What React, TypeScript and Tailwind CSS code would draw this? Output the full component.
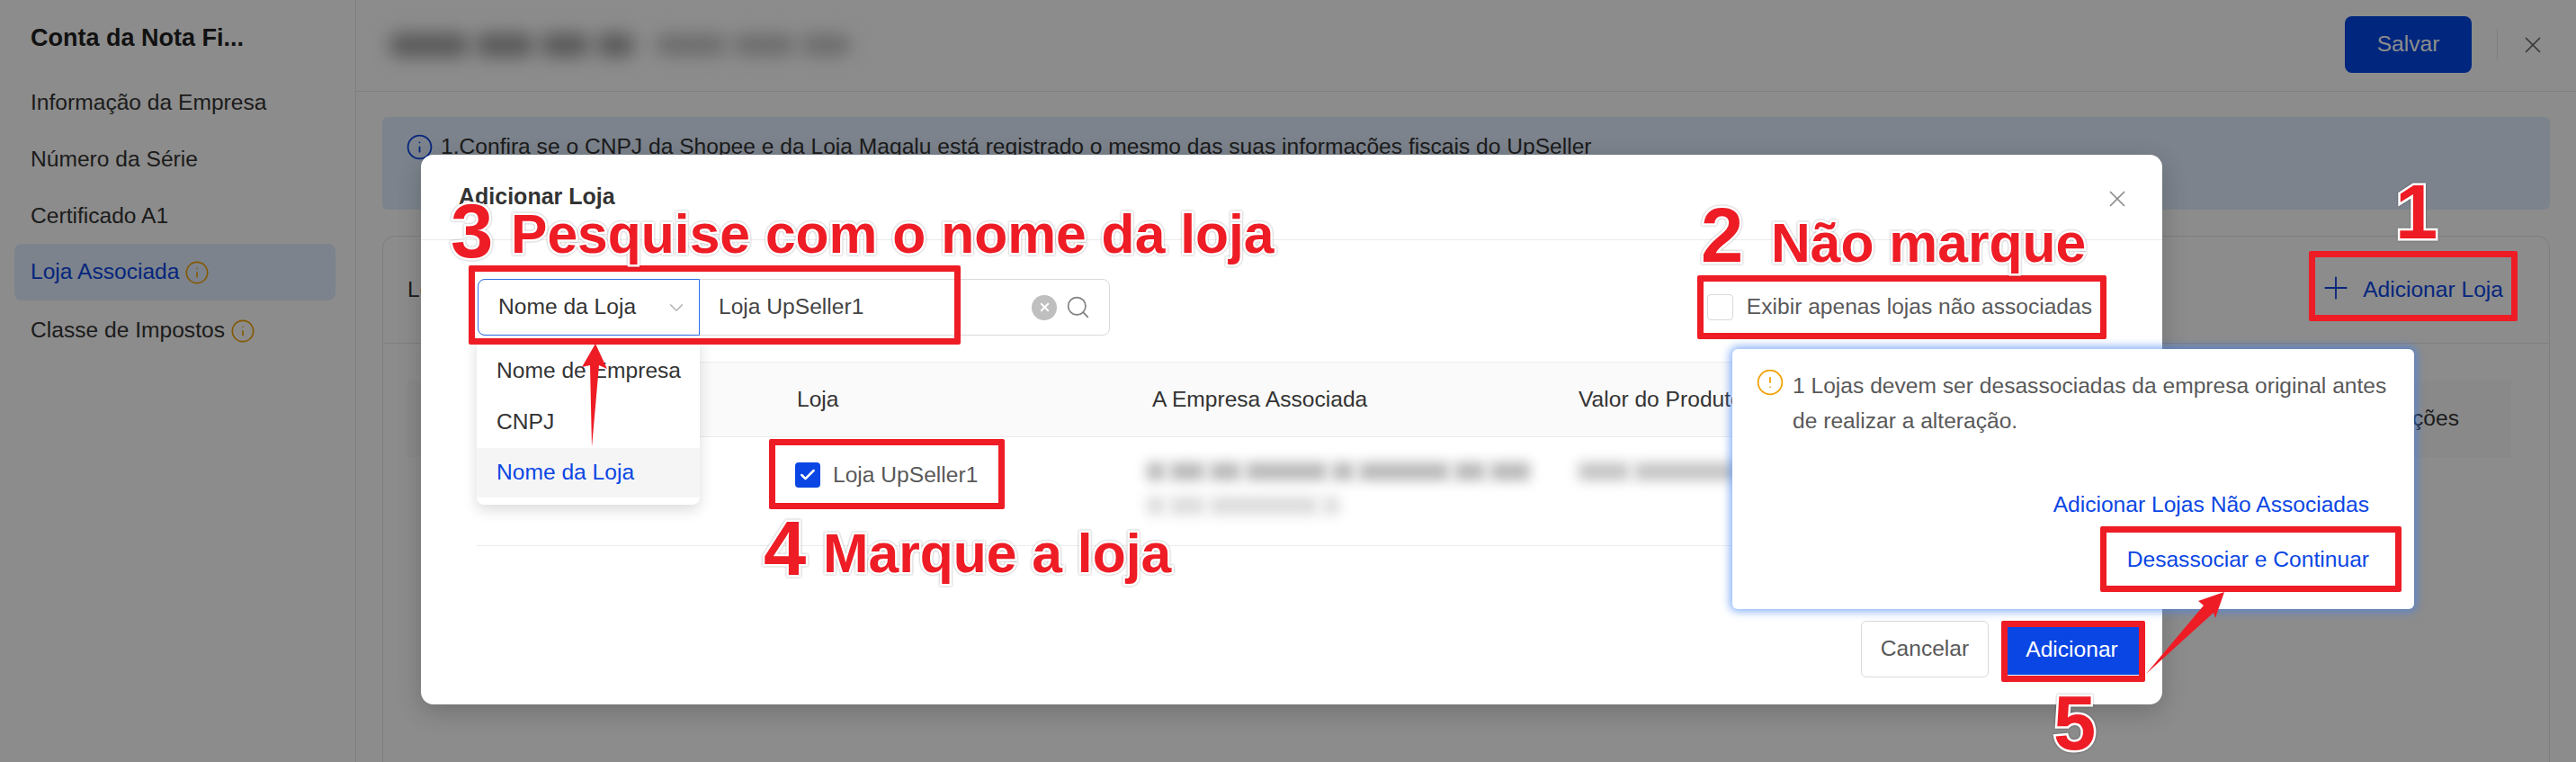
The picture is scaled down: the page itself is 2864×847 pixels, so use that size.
import { Check, ChevronDown, CircleAlert, Info, Plus, Search, X } from "lucide-react";

const menuItems = ["Informação da Empresa", "Número da Série", "Certificado A1"];

const noteText =
  "absolute whitespace-nowrap font-bold leading-none text-[#ee1c25] [paint-order:stroke_fill] [-webkit-text-stroke:5px_#ffffff] [filter:drop-shadow(0_0_1px_rgba(0,0,0,0.35))]";
const noteBox = "absolute rounded-[2px] border-[#ee1c25]";

// the reference has these texts blurred out, so only soft blotches are drawn
function Blotches({ widths, className }: { widths: number[]; className: string }) {
  return (
    <div className="flex gap-[6px]">
      {widths.map((w, i) => (
        <div key={i} className={className} style={{ width: w }} />
      ))}
    </div>
  );
}

function Sidebar() {
  return (
    <aside className="w-[396px] shrink-0 border-r border-[#e8e8e8] bg-[#ffffff] pl-4 pr-[22px]">
      <h1 className="h-[84px] pl-[18px] pt-[24px] text-[27px] font-bold leading-[36px] text-[#1f1f1f]">
        Conta da Nota Fi...
      </h1>
      <nav className="flex flex-col">
        {menuItems.map((item, i) => (
          <a key={item} className={`flex h-[63px] items-center pl-[18px] text-[#333333] ${i === 0 ? "-mt-px" : ""}`}>
            {item}
          </a>
        ))}
        <a className="-mt-px flex h-[63px] items-center gap-[6px] rounded-[8px] bg-[#e2eeff] pl-[18px] text-[#0a46e4]">
          Loja Associada
          <Info size={28} strokeWidth={1.4} className="text-[#f0a000]" />
        </a>
        <a className="flex h-[67px] items-center gap-[6px] pl-[18px] text-[#333333]">
          Classe de Impostos
          <Info size={28} strokeWidth={1.4} className="text-[#f0a000]" />
        </a>
      </nav>
    </aside>
  );
}

function PageBehind() {
  return (
    <main className="flex min-w-0 flex-1 flex-col">
      <header className="flex h-[102px] items-center border-b border-[#e8e8e8] pb-[2px] pl-[36px] pr-[33px]">
        <Blotches widths={[90, 66, 56, 44]} className="h-[26px] rounded-full bg-[#a0a0a0] blur-[10px]" />
        <div className="ml-[22px]">
          <Blotches widths={[80, 70, 56]} className="h-[22px] rounded-full bg-[#c0c0c0] blur-[10px]" />
        </div>
        <button className="ml-auto h-[63px] w-[141px] rounded-[8px] bg-[#0045e6] text-white">Salvar</button>
        <div className="ml-[28px] h-[35px] w-px bg-[#e8e8e8]" />
        <X size={30} strokeWidth={1.4} className="ml-[24px] text-[#666666]" />
      </header>
      <section className="mx-[29px] mt-[28px] h-[103px] rounded-[6px] bg-[#e2eeff] pl-[26px] pt-[15px]">
        <div className="flex items-center gap-[8px] text-[#333333]">
          <Info size={31} strokeWidth={1.4} className="text-[#0a46e4]" />
          1.Confira se o CNPJ da Shopee e da Loja Magalu está registrado o mesmo das suas informações fiscais do UpSeller
        </div>
      </section>
      <section className="mx-[29px] mt-[29px] flex-1 rounded-t-[14px] border border-b-0 border-[#e8e8e8]">
        <div className="flex h-[119px] items-center justify-between border-b border-[#e8e8e8] pl-[27px] pr-[51px]">
          <span className="text-[#333333]">Lojas Associadas</span>
          <span className="flex items-center gap-[10px] text-[#0a46e4]">
            <Plus size={40} strokeWidth={1.1} className="-mt-[4px]" />
            Adicionar Loja
          </span>
        </div>
        <div className="ml-[27px] mr-[42px] mt-[41px] flex h-[85px] items-center justify-end bg-[#fafafa] pr-[58px] text-[#333333]">
          Operações
        </div>
      </section>
    </main>
  );
}

function StoreModal() {
  return (
    <div className="absolute left-[468px] top-[172px] flex h-[611px] w-[1936px] flex-col rounded-[14px] bg-white shadow-[0_8px_28px_rgba(0,0,0,0.2)]">
      <div className="flex h-[95px] items-start justify-between border-b border-[#ececec] pl-[42px] pr-[35px] pt-[28px]">
        <h2 className="text-[25px] font-bold leading-[36px] text-[#333333]">Adicionar Loja</h2>
        <X size={30} strokeWidth={1.4} className="mt-[6px] text-[#8c8c8c]" />
      </div>

      <div className="flex items-center justify-between pl-[63px] pr-[78px] pt-[43px]">
        <div className="flex h-[63px] w-[703px] rounded-[8px] border border-[#d9d9d9]">
          <div className="-ml-px -mt-px flex h-[63px] w-[247px] shrink-0 items-center justify-between rounded-l-[8px] border border-[#2f6fe8] pl-[22px] pr-[12px] text-[#333333]">
            Nome da Loja
            <ChevronDown size={26} strokeWidth={1} className="text-[#a8a8a8]" />
          </div>
          <div className="flex flex-1 items-center pl-[21px] pr-[20px] text-[#444444]">
            Loja UpSeller1
            <span className="ml-auto flex h-[28px] w-[28px] items-center justify-center rounded-full bg-[#bfbfbf]">
              <X size={15} strokeWidth={3} className="text-white" />
            </span>
            <Search size={29} strokeWidth={1.4} className="ml-[9px] text-[#808080]" />
          </div>
        </div>
        <label className="flex items-center gap-[15px] text-[#595959]">
          <span className="h-[29px] w-[29px] rounded-[4px] border border-[#d9d9d9] bg-white" />
          Exibir apenas lojas não associadas
        </label>
      </div>

      <div className="mx-[62px] mt-[29px] border-b border-[#ececec]">
        <div className="grid h-[84px] grid-cols-[356px_395px_474px_1fr] items-center border-y border-[#ececec] bg-[#fafafa] text-[#333333]">
          <span />
          <span>Loja</span>
          <span>A Empresa Associada</span>
          <span>Valor do Produto</span>
        </div>
        <div className="grid h-[120px] grid-cols-[354px_391px_480px_1fr] pt-[28px]">
          <span />
          <span className="flex h-[28px] items-center gap-[14px] text-[#595959]">
            <span className="flex h-[28px] w-[28px] items-center justify-center rounded-[4px] bg-[#0a46e4]">
              <Check size={20} strokeWidth={3} className="text-white" />
            </span>
            Loja UpSeller1
          </span>
          <div className="flex flex-col gap-[18px]">
            <Blotches widths={[20, 38, 34, 90, 24, 100, 34, 44]} className="h-[20px] bg-[#b8b8b8] blur-[7px]" />
            <Blotches widths={[20, 38, 120, 18]} className="h-[20px] bg-[#dcdcdc] blur-[7px]" />
          </div>
          <Blotches widths={[56, 120, 60]} className="h-[20px] bg-[#c4c4c4] blur-[7px]" />
        </div>
      </div>

      <div className="mt-auto flex justify-end gap-[21px] pb-[28px] pr-[26px]">
        <button className="h-[63px] w-[142px] rounded-[6px] border border-[#d9d9d9] text-[#595959]">Cancelar</button>
        <button className="my-[5px] h-[55px] w-[146px] bg-[#0a46e4] pr-[3px] text-white">Adicionar</button>
      </div>

      <ul className="absolute left-[62px] top-[201px] w-[248px] rounded-b-[8px] bg-white pb-[8px] pt-[10px] text-[#333333] shadow-[0_6px_16px_rgba(0,0,0,0.14)]">
        <li className="flex h-[58px] items-center pl-[22px]">Nome de Empresa</li>
        <li className="flex h-[57px] items-center pl-[22px]">CNPJ</li>
        <li className="flex h-[55px] items-center bg-[#f5f5f5] pl-[22px] text-[#0a46e4]">Nome da Loja</li>
      </ul>
    </div>
  );
}

function UnlinkPopover() {
  return (
    <div className="absolute left-[1926px] top-[388px] flex h-[289px] w-[758px] flex-col rounded-[6px] bg-white pl-[26px] pr-[30px] pt-[21px] shadow-[0_0_10px_3px_rgba(60,130,245,0.6)]">
      <div className="flex gap-[9px] leading-[39px] text-[#595959]">
        <CircleAlert size={32} strokeWidth={1.3} className="shrink-0 text-[#f0a000]" />
        <p>1 Lojas devem ser desassociadas da empresa original antes de realizar a alteração.</p>
      </div>
      <a className="ml-auto mr-[20px] mt-[56px] text-[#0a46e4]">Adicionar Lojas Não Associadas</a>
      <a className="ml-auto mr-[20px] mt-[24px] text-[#0a46e4]">Desassociar e Continuar</a>
    </div>
  );
}

function Annotations() {
  return (
    <>
      <div className={`${noteBox} left-[521px] top-[295px] h-[88px] w-[547px] border-[7px]`} />
      <div className={`${noteBox} left-[1887px] top-[306px] h-[71px] w-[455px] border-[7px]`} />
      <div className={`${noteBox} left-[2567px] top-[279px] h-[78px] w-[232px] border-[7px]`} />
      <div className={`${noteBox} left-[855px] top-[488px] h-[78px] w-[262px] border-[7px]`} />
      <div className={`${noteBox} left-[2335px] top-[585px] h-[73px] w-[335px] border-[7px]`} />
      <div className={`${noteBox} left-[2225px] top-[690px] h-[68px] w-[160px] border-[7px]`} />

      <span className={`${noteText} left-[501px] top-[214px] text-[85px]`}>3</span>
      <span className={`${noteText} left-[568px] top-[230px] text-[60.6px]`}>Pesquise com o nome da loja</span>
      <span className={`${noteText} left-[1891px] top-[219px] text-[85px]`}>2</span>
      <span className={`${noteText} left-[1969px] top-[240px] text-[60.6px]`}>Não marque</span>
      <span className={`${noteText} left-[2663px] top-[193px] text-[85px]`}>1</span>
      <span className={`${noteText} left-[849px] top-[567px] text-[85px]`}>4</span>
      <span className={`${noteText} left-[915px] top-[585px] text-[60.6px]`}>Marque a loja</span>
      <span className={`${noteText} left-[2283px] top-[761px] text-[85px]`}>5</span>

      <svg className="absolute left-0 top-0 h-[847px] w-[2864px]" viewBox="0 0 2864 847">
        <polygon points="662,382 675,410 666,406 658,497 656,406 647,408" fill="#ee1c25" />
        <polygon points="2473,658 2463,687 2461,681 2386,749 2450,673 2444,668" fill="#ee1c25" />
      </svg>
    </>
  );
}

export default function App() {
  return (
    <div className="relative h-[847px] w-[2864px] overflow-hidden bg-white text-[24.6px] [font-family:'Liberation_Sans',Arial,sans-serif]">
      <div className="flex h-full">
        <Sidebar />
        <PageBehind />
      </div>
      <div className="absolute inset-0 bg-black/45" />
      <StoreModal />
      <UnlinkPopover />
      <Annotations />
    </div>
  );
}
